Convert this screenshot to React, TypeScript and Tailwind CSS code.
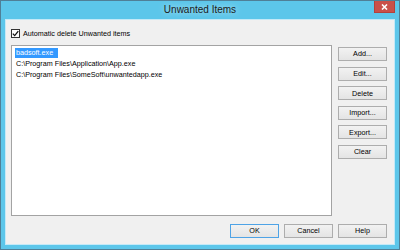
import React from 'react';

const sideButtons = ['Add...', 'Edit...', 'Delete', 'Import...', 'Export...', 'Clear'];
const items = [
  'badsoft.exe',
  'C:\\Program Files\\Application\\App.exe',
  'C:\\Program Files\\SomeSoft\\unwantedapp.exe',
];

function Btn({ label, isDefault }: { label: string; isDefault?: boolean }) {
  return (
    <button
      className={
        'h-[14px] w-[49px] flex items-center justify-center text-[7.2px] leading-none text-black bg-gradient-to-b from-[#f2f2f2] to-[#e4e4e4] border ' +
        (isDefault ? 'border-[#4ea3e6]' : 'border-[#adadad]')
      }
    >
      {label}
    </button>
  );
}

export default function App() {
  return (
    <div className="w-[400px] h-[250px] flex flex-col border border-[#4f7f97] bg-[#5cc6ea] px-[4px] pb-[4px] font-['Liberation_Sans',Arial,sans-serif]">
      {/* Title bar */}
      <div className="h-[18px] shrink-0 grid grid-cols-[1fr_auto_1fr]">
        <div />
        <div className="text-[10px] leading-[18px] text-[#1b1b1b] [text-shadow:0_0_6px_rgba(255,255,255,0.7)]">
          Unwanted Items
        </div>
        <div className="flex justify-end">
          <div className="w-[21px] h-[12px] bg-[#c9504a] border border-[#b4413b] border-t-0 flex items-center justify-center">
            <svg width="7" height="6" viewBox="0 0 7 6">
              <path d="M1 0.5 L6 5.5 M6 0.5 L1 5.5" stroke="white" strokeWidth="1.6" />
            </svg>
          </div>
        </div>
      </div>

      {/* Client area */}
      <div className="flex-1 flex flex-col border border-[#c4e9f7] bg-[#f0f0f0] pl-[5px] pr-[7px] pt-[9px] pb-[6px]">
        <label className="flex items-center gap-[3px] h-[9px]">
          <span className="w-[9px] h-[9px] border border-[#333333] bg-white flex items-center justify-center">
            <svg width="7" height="7" viewBox="0 0 7 7">
              <path d="M0.8 3.6 L2.7 5.6 L6.3 1.2" stroke="#111" strokeWidth="1.3" fill="none" />
            </svg>
          </span>
          <span className="text-[7.2px] leading-none text-black">Automatic delete Unwanted items</span>
        </label>

        <div className="mt-[7px] flex-1 flex gap-[6px]">
          <div className="flex-1 border border-[#a3a3a3] bg-white pt-[2px] pl-[3px] flex flex-col">
            {items.map((t, i) => (
              <div key={t} className="h-[11px] flex items-start">
                <span
                  className={
                    'text-[7.2px] leading-[10px] pl-[1px] pr-[5px] ' +
                    (i === 0 ? 'bg-[#3399ff] text-white' : 'text-black')
                  }
                >
                  {t}
                </span>
              </div>
            ))}
          </div>
          <div className="w-[49px] flex flex-col gap-[5.6px] pt-[2px]">
            {sideButtons.map((b) => (
              <Btn key={b} label={b} />
            ))}
          </div>
        </div>

        <div className="mt-[8px] flex justify-end gap-[5px]">
          <Btn label="OK" isDefault />
          <Btn label="Cancel" />
          <Btn label="Help" />
        </div>
      </div>
    </div>
  );
}
